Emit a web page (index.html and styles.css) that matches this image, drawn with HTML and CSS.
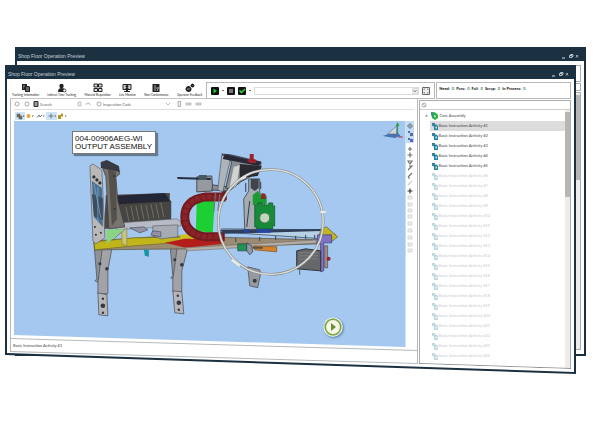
FILE: index.html
```html
<!DOCTYPE html>
<html lang="en">
<head>
<meta charset="utf-8">
<title>Shop Floor Operation Preview</title>
<link rel="stylesheet" href="styles.css">
</head>
<body>
<svg class="defs" aria-hidden="true">
  <symbol id="i-doc" viewBox="0 0 6 7"><path d="M0 0h3v3H0z" fill="#348ba5"/><path d="M2 1.500h2.500L6 3v4H2z" fill="#2683a6"/><path d="M3.500 3.500h1.500v2H3.500z" fill="#b9e4ee"/><path d="M0 .500h2M1 3h1" stroke="#4d5f68" stroke-width=".6"/></symbol>
  <symbol id="i-win" viewBox="0 0 18 6"><path d="M1 5h3" stroke="#d5dee3"/><path d="M8.500 2.500h2.500v2H8.500zM9.500 2.500v-1H12v2h-1" fill="none" stroke="#d5dee3" stroke-width=".8"/><path d="M15 2l2 2.500M17 2l-2 2.500" stroke="#d5dee3" stroke-width=".7"/></symbol>
</svg>
<main class="desktop">
  <section class="window window-back" aria-label="Background window">
    <header class="titlebar"><h2>Shop Floor Operation Preview</h2><svg class="controls"><use href="#i-win"/></svg></header>
    <div class="back-body"><div class="back-top"></div><div class="back-mid"></div><div class="back-list"><div class="scroll"><i></i></div></div></div>
  </section>

  <section class="window window-front" aria-label="Operation window">
    <header class="titlebar"><h1>Shop Floor Operation Preview</h1><svg class="controls"><use href="#i-win"/></svg></header>
    <div class="content">
      <div class="ribbon">
        <nav class="tools">
          <button><svg viewBox="0 0 10 10"><path d="M1 1h5v2h2l1 1v5H4V7H1z" fill="#222"/><path d="M2 3h2M2 5h1M5 5h3M5 7h3" stroke="#ddd" stroke-width=".7"/></svg>Tracking Information</button>
          <button><svg viewBox="0 0 10 10"><circle cx="4.500" cy="3" r="2.200" fill="#222"/><path d="M1 9q0-4 3.500-4T9 8v1z" fill="#222"/><circle cx="7.500" cy="7.500" r="1.500" fill="#fff" stroke="#222" stroke-width=".7"/></svg>Indirect Time Tracking</button>
          <button><svg viewBox="0 0 10 10"><path d="M1 1h3.500v3H1zM5.500 1H9v3H5.500zM1 5.500h3.500v3H1zM5.500 5.500H9v3H5.500z" fill="#ddd" stroke="#222"/></svg>Material Requisition</button>
          <button><svg viewBox="0 0 10 10"><path d="M1 1.500h8v5H1z" fill="#ccc" stroke="#222"/><circle cx="5" cy="3.500" r="1.400" fill="#222"/><path d="M3 6q2-3 4 0zM4 7h2v1h2v1H2V8h2z" fill="#222"/></svg>Line Monitor</button>
          <button><svg viewBox="0 0 10 10"><path d="M1.500 1h7v8h-7z" fill="#222"/><path d="M3 3h2M3 5h4M3 7h2M6 8l2-4" stroke="#ddd" stroke-width=".7"/></svg>Non-Conformance</button>
          <button><svg viewBox="0 0 10 10"><circle cx="3.500" cy="6" r="2" fill="none" stroke="#222" stroke-width="1.800"/><circle cx="7.500" cy="2.500" r="1.200" fill="none" stroke="#222" stroke-width="1.300"/><path d="M3.500 3v6M.5 6h6M5.500 2.500h4M7.500.5v4" stroke="#222" stroke-width=".6"/></svg>Operator Feedback</button>
        </nav>
        <div class="command">
          <button aria-label="Start"><svg viewBox="0 0 8 8"><rect width="8" height="8" rx="1" fill="#111"/><path d="M2.500 1.500L6 4 2.500 6.500z" fill="#16d62c"/></svg></button><i class="caret"></i>
          <button aria-label="Stop"><svg viewBox="0 0 8 8"><rect width="8" height="8" rx="1" fill="#151515"/><path d="M2 2h4v4H2z" fill="#777"/></svg></button>
          <button aria-label="Complete"><svg viewBox="0 0 8 8"><rect width="8" height="8" rx="1" fill="#111"/><path d="M1.500 3.500L3.500 5.500 7 2" fill="none" stroke="#20e533" stroke-width="1.500"/></svg></button><i class="caret"></i>
          <div class="picker"><select aria-label="Operation"><option></option></select><svg viewBox="0 0 6 6"><path d="M.5.500h5v5h-5z" fill="#eee" stroke="#ccc" stroke-width=".6"/><path d="M1.500 2L3 4l1.500-2" fill="none" stroke="#777" stroke-width=".8"/></svg></div>
          <button class="expand" aria-label="Expand"><svg viewBox="0 0 8 8"><path d="M.5.500h7v7h-7z" fill="#eee" stroke="#666"/><path d="M2 3V2h1M5 2h1v1M6 5v1H5M3 6H2V5" fill="none" stroke="#666" stroke-width=".7"/></svg></button>
        </div>
        <dl class="counts"><div><dt>Need:</dt><dd>0</dd></div><div><dt>Pass:</dt><dd>0</dd></div><div><dt>Fail:</dt><dd>0</dd></div><div><dt>Scrap:</dt><dd>0</dd></div><div><dt>In Process:</dt><dd>0</dd></div></dl>
      </div>

      <div class="panes">
        <div class="viewer">
          <div class="viewer-main">
            <div class="searchbar">
              <svg class="nav" viewBox="0 0 26 6"><circle cx="3" cy="3" r="2" fill="none" stroke="#888" stroke-width=".7"/><circle cx="13" cy="3" r="2" fill="none" stroke="#888" stroke-width=".7"/><path d="M20 .5h4v5h-4z" fill="#777" stroke="#333"/><path d="M21 2h2M21 4h2" stroke="#fff" stroke-width=".6"/></svg>
              <input class="search" aria-label="Search" placeholder="Search">
              <svg class="nav" viewBox="0 0 26 6"><path d="M1 1h3v4H1z" fill="#eee" stroke="#aaa" stroke-width=".6"/><path d="M9 4q0-2 2-2t2 2" fill="none" stroke="#999" stroke-width=".7"/><circle cx="22" cy="3" r="2" fill="none" stroke="#888" stroke-width=".7"/></svg>
              <input class="code" aria-label="Inspection Code" placeholder="Inspection Code">
              <svg class="nav nav-wide" viewBox="0 0 40 6"><path d="M1 2l2 2 2-2" fill="none" stroke="#999" stroke-width=".7"/><path d="M13 .5h2.500v5H13z" fill="#eee" stroke="#888" stroke-width=".6"/><path d="M21 2h5v2h-5zM31 2h5v2h-5z" fill="#ddd" stroke="#aaa" stroke-width=".7"/></svg>
            </div>
            <div class="viewbar">
              <svg viewBox="0 0 56 8"><path d="M0 0h10v8H0zM31 0h11v8H31z" fill="#cfe4f5"/><path d="M2 2h3v3H2zM4 4h3v3H4z" fill="#87754b" stroke="#456" stroke-width=".5"/><circle cx="13.500" cy="4" r="2" fill="#e4a833"/><path d="M22 5.500L24 3l1 2 2-2M36 1.500v5M33.500 4h5" stroke="#5b7484" fill="none" stroke-width=".9"/><path d="M43 3h3V1.500h2v3h-2V7h-3z" fill="#b99624"/><path d="M8 3.500h1.500L8.700 5zM17 3.500h1.500L17.700 5zM28 3.500h1.500L28.700 5zM39.500 3.500H41L40.200 5zM50 3.500h1.500L50.700 5z" fill="#333"/></svg>
            </div>
            <div class="stage-row">
              <div class="stage">
                <svg class="model" viewBox="14 121 392 226" preserveAspectRatio="xMinYMin meet" role="img" aria-label="Output assembly model">
                  <!-- orientation marker -->
                  <path d="M383 136l14-5 4 5-6 2z" fill="#4774b4"/><path d="M388 134l9-8v8z" fill="#cdd5df" stroke="#667" stroke-width=".6"/><path d="M398 133v-7" stroke="#27964a"/><path d="M396 126l2-4 2 4z" fill="#27a644"/><path d="M399 137h4" stroke="#b32332"/>
                  <!-- legs -->
                  <g stroke="#444950" stroke-width=".7">
                    <path d="M94 243h9v14l-2 27-6-3 2-2z" fill="#8f9196"/><path d="M103 243h7l2 6-4 21v24h-10v-11z" fill="#a2a2a7"/><path d="M98 293l9 2 1 21-9-1z" fill="#b8b5b8"/>
                    <path d="M170 243h8v14l-2 24-5-3 2-2z" fill="#8f9196"/><path d="M178 243h8l1 9-5 19v21h-9v-12z" fill="#a2a2a7"/><path d="M173 291l9 1 2 22-9-1z" fill="#b8b5b8"/>
                    <path d="M248 267l12 3 1 3-3 15-8-2z" fill="#969aa0"/>
                  </g>
                  <g fill="#363940"><circle cx="107" cy="269" r="1.800"/><circle cx="103" cy="299" r="1.200"/><circle cx="103" cy="306" r="2.300"/><circle cx="103" cy="313" r="1.200"/><circle cx="182" cy="265" r="1.800"/><circle cx="178" cy="296" r="1.200"/><circle cx="179" cy="303" r="2.300"/><circle cx="179" cy="310" r="1.200"/><circle cx="255" cy="281" r="2"/><circle cx="100" cy="264" r="1.500"/><circle cx="175" cy="260" r="1.500"/></g>
                  <!-- base rails -->
                  <path d="M94 241l74-5 153 4v4l-70 2-64 3-92 1z" fill="#9b8b72" stroke="#55503f" stroke-width=".7"/>
                  <path d="M94 242l40-4 60-1 6 4-66 5-39 4z" fill="#c2b51c" stroke="#68651c" stroke-width=".6"/>
                  <path d="M165 243l20-4 37 1 2 4-38 4z" fill="#b41e1a"/><path d="M185 248l135-8v3l-132 8z" fill="#b4ada4" stroke="#656567" stroke-width=".5"/>
                  <path d="M144 250h5v7l-4-1z" fill="#1795a4"/><path d="M180 235l12-1 4 3-16 2z" fill="#d0be25"/>
                  <!-- guard and housing -->
                  <path d="M106 195l64-2v30l-66 6z" fill="#4b4945"/><path d="M115 196l50-3 6 9-54 5z" fill="#222637"/>
                  <path d="M118 204l53-3v23l-54 3z" fill="#464541" stroke="#25262a" stroke-width=".6"/>
                  <path d="M126 207l3 14M131 206l3 14M136 206l3 14M141 205l3 14M146 205l3 14M151 204l3 14M156 204l3 14M161 203l3 14" stroke="#85827b" stroke-width=".7"/>
                  <path d="M118 223l59-4 4 3v4l-65 4z" fill="#b7bbc7" stroke="#666a74" stroke-width=".6"/>
                  <path d="M153 226l25-1v12l-17 2-8-3z" fill="#a6abb4" stroke="#525763" stroke-width=".6"/>
                  <path d="M130 228l14-1 4 3-8 3zM153 231l8 1v5l-10-2z" fill="#9590a5" stroke="#4b4f61" stroke-width=".7"/>
                  <path d="M101 163l17 5 2 6-4 3 2 24 7 26-16 2-3-52z" fill="#77736d" stroke="#3f3d3d" stroke-width=".7"/>
                  <path d="M101 162l6-2 12 6 1 6-19-4z" fill="#373943"/><path d="M108 169l8 3 1 47-5 7-3-48z" fill="#55504c"/>
                  <path d="M90 166l3-2 9 6 3 68-9 6-3-3z" fill="#b9b8b8" stroke="#5d5d60" stroke-width=".7"/>
                  <path d="M92 181l10 7 1 39-9-10z" fill="#496f94"/><path d="M92 194l11 4v22l-9-4z" fill="#394e65"/>
                  <path d="M94 184l7 34M98 187v35" stroke="#88abc4" stroke-width=".7"/>
                  <g fill="#293236"><circle cx="94" cy="177" r="1.600"/><circle cx="97" cy="180" r="1.600"/><circle cx="100" cy="183" r="1.600"/><circle cx="95" cy="227" r="1"/><circle cx="101" cy="233" r="1"/><circle cx="96" cy="235" r="1"/><circle cx="114" cy="176" r="1"/><circle cx="115" cy="209" r="1"/></g>
                  <path d="M106 230l18-1-17 15z" fill="#89d480"/><path d="M127 228v18l-5-2v-12l-8 7z" fill="#c8c578" stroke="#7f7941" stroke-width=".6"/>
                  <!-- ring conveyor -->
                  <path d="M197 201h18l-2 32-17-2z" fill="#1ccf32"/><path d="M197 177l15-1 1 15-16 1z" fill="#9699a0" stroke="#474b55"/><path d="M177 177l34 1v2l-33-1z" fill="#272d3b"/><path d="M199 175h8v5h-8z" fill="#455864"/>
                  <path d="M226 197H206q-21 3-21 20t21 20h19" fill="none" stroke="#711b21" stroke-width="9"/><path d="M224 197H206q-21 3-21 20t21 20h17" fill="none" stroke="#8b2428" stroke-width="5" stroke-dasharray="5 1"/>
                  <path d="M222 191l5-1v10h-5z" fill="#701c24"/>
                  <!-- arm -->
                  <path d="M213 185l16 2-2 4-15-1z" fill="#898d98" stroke="#444b57"/><path d="M222 155l9 3-8 34-5-2z" fill="#aeb4bc" stroke="#52575e" stroke-width=".7"/><path d="M222 154l10 1 29 7v9l-20 11-10 8-5-2 6-26z" fill="#888d92" stroke="#30343c" stroke-width=".8"/><path d="M225 154l26 6 11 2-3 4-36-7z" fill="#272936"/><path d="M240 164l22 2-4 10-18 2z" fill="#292b31"/><path d="M234 167l6-2-3 20-8 6z" fill="#d0d2d2"/><path d="M250 154h4v5l3 1-1 3h-6l-3-3 3-1z" fill="#9b222b"/><path d="M216 192l-2 20M220 194l-2 17" stroke="#6d727b"/>
                  <!-- blue conveyor -->
                  <path d="M222 229l104 1 10 5-12 4-104-7z" fill="#b6d0e5" stroke="#344151" stroke-width=".7"/><path d="M221 230l104-1 5 2-107 3z" fill="#303f59"/><path d="M236 238v4M260 237v4M276 236v4M296 236v4M306 235v4M315 235v4" stroke="#33445d"/>
                  <!-- central station -->
                  <path d="M249 179h11v14l5 6-2 30-18 1-1-31 5-8z" fill="#a6adb1" stroke="#394049" stroke-width=".8"/><path d="M251 179h8v9l-4 3-4-3z" fill="#3e454f"/><path d="M246 183v9M261 182v7M250 201l-3 26M257 193l3 8" stroke="#35394a"/><path d="M253 195l5-4 3 4 6 1v8l-14 1z" fill="#1a9b35"/><path d="M262 193l4 1v5h-5z" fill="#8d2929"/><path d="M255 205h3v-2h4v2h7v-2h4v3h2v20h-2v3h-16v-2h-2z" fill="#168b38" stroke="#155229" stroke-width=".7"/><circle cx="265" cy="218" r="5" fill="#c5d6bf" stroke="#536856" stroke-width=".8"/><path d="M244 229h5v4h-5zM257 229h14v4h-14z" fill="#2545a3"/>
                  <path d="M238 244h9v7h-9z" fill="#1e9553" stroke="#234" stroke-width=".6"/><path d="M247 243l5 3 1 6-3 3-3-4z" fill="#9396a0" stroke="#343a48" stroke-width=".7"/><path d="M254 246l23 1v5l-22-2z" fill="#cf832d" stroke="#81501c" stroke-width=".7"/><path d="M253 248h10" stroke="#554" stroke-width="2"/>
                  <!-- right end -->
                  <path d="M321 229l6-2 11 10-5 4-14-1z" fill="#c0b625" stroke="#504d31" stroke-width=".6"/><path d="M318 235h14v8h-8v28l-3 1v-28h-4z" fill="#7f72c4" stroke="#3c3868" stroke-width=".7"/><path d="M297 251l9-2 15 2v20l-24-2z" fill="#65676b" stroke="#303538"/><path d="M299 253h19M299 256h19M299 259h19" stroke="#7d7f83"/><path d="M325 246h3v22h-3z" fill="#a18d8b" stroke="#493a41" stroke-width=".6"/><circle cx="329" cy="259" r="2" fill="#9b2233"/><path d="M300 270v5" stroke="#465"/>
                  <circle cx="271" cy="222" r="52.500" fill="none" stroke="#7f888a" stroke-width="2.600"/><circle cx="271" cy="222" r="52.500" fill="none" stroke="#dddcd4" stroke-width="1.600"/>
                  <path d="M321 212h5M232 260l8 6M241 179l5-2" stroke="#eeece4" stroke-width="2"/>
                </svg>
                <p class="callout">004-00906AEG-WI<br>OUTPUT ASSEMBLY</p>
                <button class="play" aria-label="Play"><svg viewBox="0 0 20 20"><circle cx="10" cy="10" r="9.500" fill="#fff"/><circle cx="10" cy="10" r="7.800" fill="#f7f7e9" stroke="#82aa43" stroke-width="1.800"/><path d="M8 6l5 4-5 4z" fill="#679136"/></svg></button>
              </div>
              <svg class="sidebar" viewBox="0 0 8 134"><path d="M0 0h8v22H0z" fill="#c2dcf4"/><g fill="none" stroke="#6f8190" stroke-width=".8"><circle cx="4" cy="5" r="2"/><path d="M4 2v6M1 5h6"/></g><g fill="#5a67b0"><path d="M2 10h2v2H2zM4 12h3v3H4zM2 17h2v2H2zM4 18h3v3H4z"/></g><g fill="none" stroke="#727272" stroke-width="1.200"><path d="M2 28h4M4 26v4M1.500 34h5M4 31.500v5M2 40h4l-2 3zM2 49l4-4-3 0M2 56l4-4M2 57h2"/><path d="M2 64l4-4" stroke="#ccc"/><path d="M1.500 70h5M4 67.500v5" stroke="#333"/></g><g fill="#eee" stroke="#ccc" stroke-width=".7"><path d="M2 75h4v3H2zM2 82h4v3H2zM2 88h4v3H2zM2 94h4v3H2zM2 101h4v3H2zM2 108h4v3H2zM2 115h4v3H2zM2 122h4v3H2zM2 128h4v3H2z"/></g></svg>
            </div>
          </div>
          <footer class="status"><span>Basic Instruction Activity #1</span></footer>
        </div>
        <aside class="tree">
          <div class="tree-search"><svg viewBox="0 0 6 6"><circle cx="3" cy="3" r="2" fill="none" stroke="#888" stroke-width=".7"/><path d="M2 2l3 3" stroke="#999" stroke-width=".6"/></svg></div>
          <div class="tree-body">
            <div class="tree-list">
              <div class="root"><svg viewBox="0 0 14 8"><path d="M0 4.500l1.500-2L3 4.500z" fill="#888"/><path d="M6 1l3-1 2 1 2 2v3l-3 2-3-2z" fill="#27b43a"/><path d="M6 0h2v3l3 2-1 1-4-3z" fill="#3a8f99"/><path d="M9 3l2 1-1 2z" fill="#fff"/></svg>Core Assembly</div>
              <ul id="activities"></ul>
            </div>
            <div class="scroll"><i></i></div>
          </div>
        </aside>
      </div>
    </div>
  </section>
</main>
<script src="app.js"></script>
</body>
</html>
```
FILE: styles.css
```css
* { box-sizing: border-box; }
body { margin: 0; background: #fff; color: #444; font: 4px/6px Lato, "Liberation Sans", sans-serif; }
h1, h2, p, dl, dd, ul { margin: 0; padding: 0; }
ul { list-style: none; }
button { margin: 0; padding: 0; border: 0; background: none; color: inherit; font: inherit; }
svg { display: block; flex: none; }
.defs { position: absolute; width: 0; height: 0; }
.desktop { position: relative; height: 100vh; min-height: 400px; overflow: hidden; }

.window { position: absolute; display: flex; flex-direction: column; padding: 0 2px; background: #1b3040; }
.window-back { inset: 47px 15px 72px 15px; padding-bottom: 2px; }
.window-front { inset: 65px 25px 54px 5px; clip-path: polygon(0 0, 100% 0, 100% 100%, 0 calc(100% - 19px)); }
.titlebar { display: flex; flex: none; justify-content: space-between; align-items: center; height: 14px; padding-top: 4px; background: #1b3040; color: #c6d0d6; }
.titlebar h1, .titlebar h2 { font: 5px/6px "Liberation Sans", sans-serif; padding-left: 1px; }
.controls { width: 18px; height: 6px; margin-right: 5px; }

.back-body { display: flex; flex: 1; flex-direction: column; gap: 1px; padding: 4px 3px; background: #fff; }
.back-body > div { border: 1px solid #a9adb0; }
.back-top { height: 17px; }
.back-mid { height: 8px; }
.back-list { display: flex; flex: 1; justify-content: flex-end; }

.content { display: flex; flex: 1; flex-direction: column; min-height: 0; padding: 3px 3px 0; background: #fff; clip-path: polygon(0 0, 100% 0, 100% calc(100% - 2px), 0 calc(100% - 21px)); }
.ribbon { display: flex; flex: none; height: 17px; }
.tools { display: flex; flex: 198 0 0; justify-content: space-between; min-width: 0; padding: 0 4px 0 2px; border-bottom: 1px solid #c3c6c8; white-space: nowrap; }
.tools button { display: flex; flex-direction: column; align-items: center; justify-content: flex-end; color: #222; font-size: 3px; line-height: 5px; }
.tools svg { width: 10px; height: 10px; }
.command { display: flex; flex: 228 0 0; align-items: center; gap: 3px; min-width: 0; padding: 0 4px; border: 1px solid #b5b9bb; }
.command svg { width: 8px; height: 8px; }
.picker { display: flex; flex: 1; align-items: center; min-width: 0; border: 1px solid #ddd; }
.picker select { flex: 1; min-width: 0; height: 6px; padding: 0; border: 0; background: #fff; font: inherit; appearance: none; }
.picker svg { width: 6px; height: 6px; }
.caret { width: 2px; height: 1px; background: #777; }
.counts { display: flex; flex: 134 0 0; gap: 2px; min-width: 0; margin-left: 1px; padding: 3px 2px; border: 1px solid #b5b9bb; color: #111; font-weight: bold; white-space: nowrap; }
.counts div { display: flex; gap: 2px; }
.counts dd { color: #478467; }

.panes { display: flex; flex: 1; min-height: 0; }
.viewer { position: relative; display: flex; flex: 409 0 0; flex-direction: column; min-width: 0; }
.viewer-main { position: relative; display: flex; flex: 1; flex-direction: column; min-height: 0; padding: 0 3px; border-left: 1px solid #b5b9bb; border-right: 1px solid #b5b9bb; }
.searchbar { display: flex; flex: none; align-items: center; height: 11px; border-bottom: 1px solid #e0e0e0; }
.nav { width: 26px; height: 6px; }
.nav-wide { width: 40px; margin-left: 34px; }
input { min-width: 0; height: 7px; padding: 0; border: 0; background: none; color: #666; font: inherit; }
input::placeholder { color: #666; opacity: 1; }
.search { width: 37px; }
.code { width: 28px; }
.viewbar { flex: none; height: 11px; padding: 2px 0 0 1px; }
.viewbar svg { width: 56px; height: 8px; }
.stage-row { display: flex; flex: 1; min-height: 0; }
.stage { position: relative; flex: 1; overflow: hidden; background: #a4c8ef; clip-path: polygon(0 0, 100% 0, 100% calc(100% - 5px), 0 calc(100% - 17px)); }
.model { width: 100%; height: 100%; }
.callout { position: absolute; left: 58px; top: 10px; padding: 3px 3px 2px 2px; border: 1px solid #777; background: #fff; box-shadow: 2px 2px 1px #657b92; color: #111; font: 8px/8px "Liberation Sans", sans-serif; white-space: nowrap; }
.play { position: absolute; right: 63px; bottom: 15px; width: 20px; height: 20px; border-radius: 50%; box-shadow: 1px 1px 2px #64809b; }
.play svg { width: 20px; height: 20px; }
.sidebar { width: 8px; height: 134px; }
.status { position: relative; flex: none; height: 22px; }
.status span { position: relative; display: block; margin-top: -9px; padding-left: 3px; line-height: 6px; }
.status::before { content: ""; position: absolute; left: 0; right: 0; top: -14px; height: 12px; border: 1px solid #b5b9bb; background: #fff; transform: skewY(1.7deg); transform-origin: left top; }

.tree { position: relative; display: flex; flex: 151 0 0; flex-direction: column; min-width: 0; margin: 1px 0 0 1px; border: 1px solid #a9adb0; border-bottom: 0; clip-path: polygon(0 0, 100% 0, 100% calc(100% - 5px), 0 calc(100% - 10px)); }
.tree::after { content: ""; position: absolute; left: -1px; right: -1px; bottom: 10px; height: 1px; background: #8f9498; transform: skewY(1.9deg); transform-origin: left top; }
.tree-search { flex: none; height: 9px; padding: 1px; border-bottom: 1px solid #ccc; }
.tree-search svg { width: 6px; height: 6px; }
.tree-body { display: flex; flex: 1; min-height: 0; }
.tree-list { flex: 1; overflow: hidden; white-space: nowrap; }
.root { display: flex; align-items: center; gap: 1px; height: 11px; padding-left: 5px; }
.root svg { width: 14px; height: 8px; }
#activities li { display: flex; align-items: center; gap: 1px; height: 10px; margin-left: 10px; padding-left: 2px; }
#activities svg { width: 6px; height: 7px; }
#activities .selected { background: #dcdcdc; }
#activities .disabled { opacity: .3; }
.scroll { width: 5px; padding-top: 2px; background: #ececec; }
.scroll i { display: block; height: 85px; background: #b6b6b6; }
```
FILE: app.js
```js
const list = document.getElementById("activities");
for (let n = 1; n <= 24; n++) {
  const item = document.createElement("li");
  if (n === 1) item.className = "selected";
  if (n > 5) item.className = "disabled";
  item.innerHTML = `<svg><use href="#i-doc"/></svg>Basic Instruction Activity #${n}`;
  list.append(item);
}
```
